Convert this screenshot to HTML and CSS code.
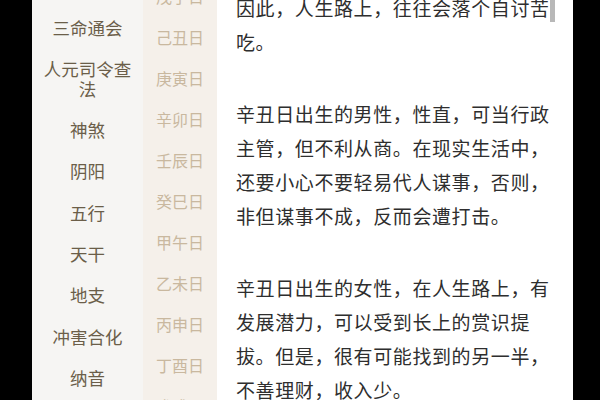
FILE: index.html
```html
<!DOCTYPE html>
<html lang="zh-CN">
<head>
<meta charset="utf-8">
<title>辛丑日</title>
<link rel="stylesheet" href="styles.css">
</head>
<body>
<div class="screen">
  <nav class="cats">
    <div class="cat">三命通会</div>
    <div class="cat">人元司令查法</div>
    <div class="cat">神煞</div>
    <div class="cat">阴阳</div>
    <div class="cat">五行</div>
    <div class="cat">天干</div>
    <div class="cat">地支</div>
    <div class="cat">冲害合化</div>
    <div class="cat">纳音</div>
  </nav>
  <nav class="days">
    <div class="day">戊子日</div>
    <div class="day">己丑日</div>
    <div class="day">庚寅日</div>
    <div class="day">辛卯日</div>
    <div class="day">壬辰日</div>
    <div class="day">癸巳日</div>
    <div class="day">甲午日</div>
    <div class="day">乙未日</div>
    <div class="day">丙申日</div>
    <div class="day">丁酉日</div>
    <div class="day">戊戌日</div>
  </nav>
  <main class="content">
    <div class="scrollbar"></div>
    <article class="article">
      <p>因此，人生路上，往往会落个自讨苦吃。</p>
      <p>辛丑日出生的男性，性直，可当行政主管，但不利从商。在现实生活中，还要小心不要轻易代人谋事，否则，非但谋事不成，反而会遭打击。</p>
      <p>辛丑日出生的女性，在人生路上，有发展潜力，可以受到长上的赏识提拔。但是，很有可能找到的另一半，不善理财，收入少。</p>
    </article>
  </main>
</div>
</body>
</html>
```

FILE: styles.css
```css
html, body {
  margin: 0;
  padding: 0;
  background: #000;
}
body {
  width: 600px;
  height: 400px;
  overflow: hidden;
  font-family: "Noto Sans CJK SC", "Noto Sans", sans-serif;
}
.screen {
  display: flex;
  height: 400px;
  width: 541px;
  margin-left: 32px;
  overflow: hidden;
}
.cats {
  flex: 0 0 111px;
  background: #f6f5f3;
  padding-top: 7px;
  box-sizing: border-box;
}
.cat {
  padding: 10.65px 6px;
  line-height: 20px;
  font-size: 17.5px;
  text-align: center;
  color: #6b5e49;
}
.days {
  flex: 0 0 74px;
  background: #f5f0ea;
}
.day {
  padding: 10.55px 0;
  line-height: 20px;
  font-size: 16px;
  text-align: center;
  color: #c9b89f;
}
.day:first-child {
  margin-top: -25px;
}
.content {
  flex: 1;
  background: #fff;
  position: relative;
  padding-left: 19px;
  overflow: hidden;
}
.scrollbar {
  position: absolute;
  left: 333px;
  top: 0;
  width: 5px;
  height: 22px;
  background: #b8b8b8;
}
.article {
  width: 318px;
  margin-top: -9px;
  font-size: 19px;
  letter-spacing: 0.6px;
  line-height: 34px;
  color: #2e2e2e;
}
.article p {
  margin: 0 0 38px;
}
```
